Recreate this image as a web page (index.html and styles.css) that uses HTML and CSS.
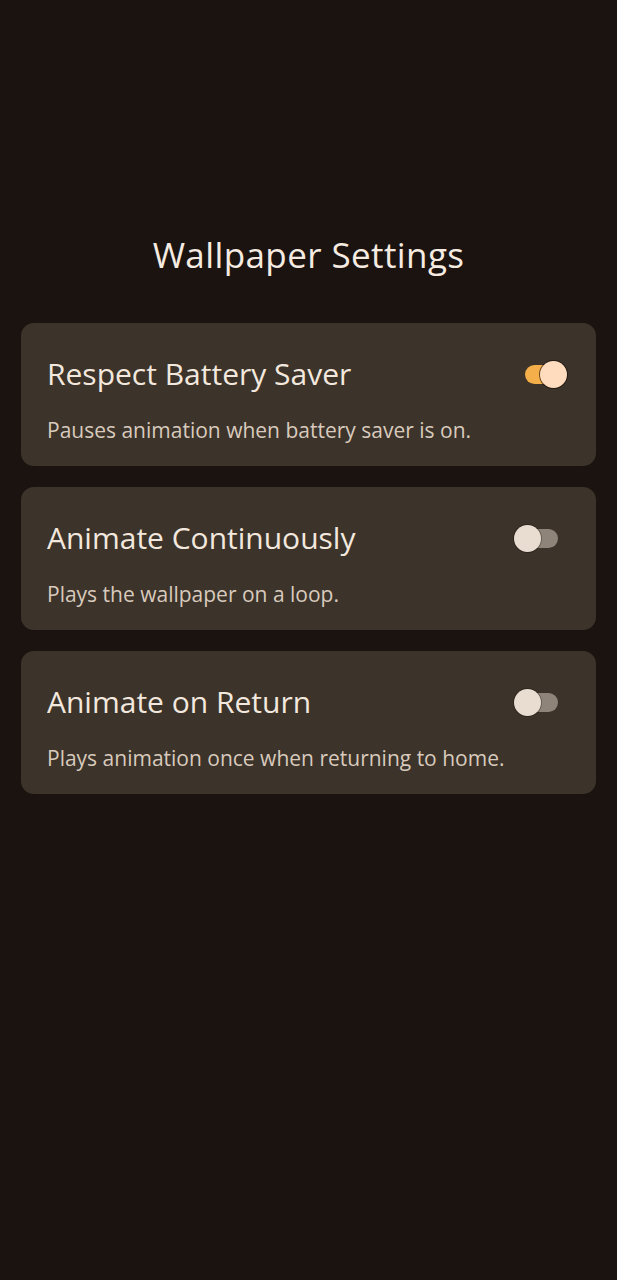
FILE: index.html
```html
<!DOCTYPE html>
<html lang="en">
<head>
<meta charset="utf-8">
<title>Wallpaper Settings</title>
<link rel="stylesheet" href="styles.css">
</head>
<body>
<main class="page">
  <h1 class="page-title">Wallpaper Settings</h1>
  <section class="card">
    <div class="card-row">
      <h2 class="card-title">Respect Battery Saver</h2>
      <span class="toggle toggle-on"><span class="track"></span><span class="thumb"></span></span>
    </div>
    <p class="card-desc">Pauses animation when battery saver is on.</p>
  </section>
  <section class="card">
    <div class="card-row">
      <h2 class="card-title">Animate Continuously</h2>
      <span class="toggle"><span class="track"></span><span class="thumb"></span></span>
    </div>
    <p class="card-desc">Plays the wallpaper on a loop.</p>
  </section>
  <section class="card">
    <div class="card-row">
      <h2 class="card-title">Animate on Return</h2>
      <span class="toggle"><span class="track"></span><span class="thumb"></span></span>
    </div>
    <p class="card-desc">Plays animation once when returning to home.</p>
  </section>
</main>
</body>
</html>
```
FILE: styles.css
```css
html, body {
  margin: 0;
  padding: 0;
  background: #1b1310;
}
body {
  font-family: "Open Sans", Roboto, "Liberation Sans", sans-serif;
  color: #f3e8de;
  min-height: 1280px;
}
.page {
  padding: 233px 21px 0;
  display: flex;
  flex-direction: column;
  gap: 21px;
}
.page-title {
  margin: 0 0 25px;
  text-align: center;
  font-size: 35px;
  letter-spacing: 0.4px;
  line-height: 44px;
  font-weight: 400;
  color: #f5ebe1;
}
.card {
  background: #3c332a;
  border-radius: 13px;
  padding: 31px 26px 21px;
  height: 143px;
  box-sizing: border-box;
}
.card-row {
  display: flex;
  align-items: center;
  justify-content: space-between;
}
.card-title {
  margin: 0;
  font-size: 30px;
  line-height: 40px;
  font-weight: 400;
  color: #f3e8de;
}
.card-desc {
  margin: 22px 0 0;
  font-size: 21px;
  line-height: 28px;
  color: #d8cabd;
}
.toggle {
  position: relative;
  width: 52px;
  height: 27px;
  margin-right: 4px;
  flex: none;
}
.track {
  position: absolute;
  left: 9px;
  top: 4px;
  width: 35px;
  height: 19px;
  border-radius: 10px;
  background: #8e8479;
}
.thumb {
  position: absolute;
  left: 0;
  top: 0;
  width: 27px;
  height: 27px;
  border-radius: 50%;
  background: #e9ddd2;
  box-shadow: 0 0 0 1px rgba(20, 12, 6, 0.3);
}
.toggle-on .track {
  background: #f4ae4a;
  left: 11px;
}
.toggle-on .thumb {
  left: 26px;
  background: #fedcbd;
  box-shadow: 0 0 0 1px rgba(20, 12, 6, 0.6);
}
```
